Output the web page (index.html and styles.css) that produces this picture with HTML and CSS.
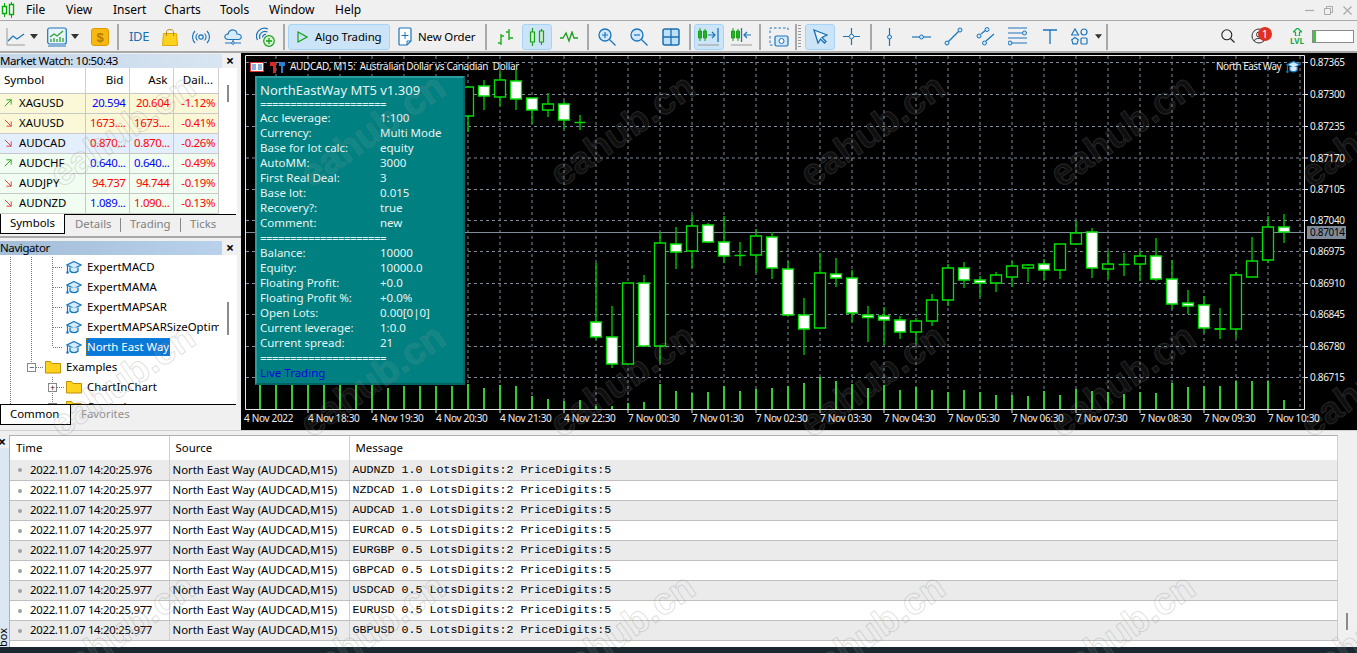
FILE: index.html
```html
<!DOCTYPE html>
<html lang="en">
<head>
<meta charset="utf-8">
<title>MetaTrader 5</title>
<link rel="stylesheet" href="styles.css">
</head>
<body>
<svg class="defs" width="0" height="0">
  <symbol id="cap" viewBox="0 0 16 15"><path d="M8 1.5 15 5 8 8.5 1 5Z" fill="#d5eafa" stroke="#1878be" stroke-width="1.3"/><path d="M4 7.5V11c2 2.2 6 2.2 8 0V7.5" fill="#d5eafa" stroke="#1878be" stroke-width="1.3"/><path d="M1.5 5.5V12" stroke="#1878be" stroke-width="1.2"/><circle cx="1.5" cy="12.5" r="1.3" fill="#1878be"/></symbol>
  <symbol id="up" viewBox="0 0 10 10"><path d="M1 9 9 1M3 1h6v6" fill="none" stroke="#12a012" stroke-width="1.1"/></symbol>
  <symbol id="down" viewBox="0 0 10 10"><path d="M1 1 9 9M9 3v6H3" fill="none" stroke="#d83030" stroke-width="1.1"/></symbol>
  <symbol id="folder" viewBox="0 0 16 14"><path d="M.5 13V1.5h5l1.5 2h8.500V13Z" fill="#ffd21e" stroke="#c49000"/></symbol>
  <symbol id="drop" viewBox="0 0 8 5"><path d="M0 0h8L4 5Z" fill="#333"/></symbol>
</svg>

<header class="menubar">
  <svg class="logo" width="14" height="16" viewBox="0 0 14 16"><path d="M3.500 1v14M10.500 0v16" stroke="#0a0" stroke-width="1"/><path d="M1.500 4.500h4v7h-4zM8.500 2.500h4v10h-4z" fill="#fff" stroke="#0a0" stroke-width="1.400"/></svg>
  <nav class="menu">
    <span class="mi m-file">File</span><span class="mi m-view">View</span><span class="mi m-insert">Insert</span><span class="mi m-charts">Charts</span><span class="mi m-tools">Tools</span><span class="mi m-window">Window</span><span class="mi m-help">Help</span>
  </nav>
  <div class="winctl">
    <svg width="9" height="9" viewBox="0 0 9 9"><path d="M0 4.500h9" stroke="#a8a8a8" stroke-width="1.200"/></svg>
    <svg width="9" height="9" viewBox="0 0 9 9"><path d="M.5 2.500h6v6h-6zM2.500 2.500v-2h6v6h-2" fill="none" stroke="#a8a8a8"/></svg>
    <svg width="9" height="9" viewBox="0 0 9 9"><path d="m.5.500 8 8m0-8-8 8" stroke="#a8a8a8" stroke-width="1.200"/></svg>
  </div>
</header>

<div class="toolbar">
  <svg class="ic ml6" width="20" height="20" viewBox="0 0 20 20"><path d="M1 1v17h18" fill="none" stroke="#999"/><path d="M2 14l5-5 4 3 7-5" fill="none" stroke="#1a75bb" stroke-width="1.200"/></svg>
  <svg class="ic ml4" width="8" height="5"><use href="#drop"/></svg>
  <svg class="ic ml9" width="20" height="20" viewBox="0 0 20 20"><rect x=".7" y="1" width="18.600" height="16" rx="2" fill="#e8f3fc" stroke="#1a75bb" stroke-width="1.200"/><path d="M3 10l4-3 3 2 6-5" fill="none" stroke="#2aa02a" stroke-width="1.200"/><path d="M4 15v-3M7 15v-4M10 15v-3M13 15v-5M16 15v-4" stroke="#2aa02a" stroke-width="1.300"/><path d="M1 19h18" stroke="#1a75bb"/></svg>
  <svg class="ic ml4" width="8" height="5"><use href="#drop"/></svg>
  <svg class="ic ml12" width="18" height="18" viewBox="0 0 18 18"><rect x=".5" y=".5" width="17" height="17" rx="2.500" fill="#f7b90f" stroke="#dd9a00"/><text class="dollar" x="9" y="14">$</text></svg>
  <i class="sep ml8"></i>
  <span class="ide ml10">IDE</span>
  <svg class="ic ml15" width="16" height="18" viewBox="0 0 16 18"><path d="M1.500 5.500h13l1 12H.5Z" fill="#ffd21e" stroke="#e0a800"/><path d="M4.500 8V3.500C4.500 1 11.500 1 11.500 3.500V8" fill="none" stroke="#b48a10"/></svg>
  <svg class="ic ml14" width="18" height="14" viewBox="0 0 18 14"><circle cx="9" cy="7" r="2.200" fill="none" stroke="#1a75bb" stroke-width="1.200"/><path d="M5.500 3.500c-1.800 2-1.800 5 0 7M12.500 3.500c1.800 2 1.800 5 0 7M3 1c-3.300 3.500-3.300 8.500 0 12M15 1c3.300 3.500 3.300 8.500 0 12" fill="none" stroke="#1a75bb" stroke-width="1.100"/></svg>
  <svg class="ic ml14" width="18" height="18" viewBox="0 0 18 18"><path d="M4.500 11.500C1.500 11.500.5 9.500 1 8c.5-1.500 2-2.200 3-1.800C4.500 3 7 1.500 9.500 2c2.300.5 3.500 2.500 3.500 4 2.500-.2 4.500 1.500 4.300 3.200-.2 1.600-1.500 2.300-3 2.300Z" fill="#d8ecfb" stroke="#1a75bb" stroke-width="1.100"/><path d="M9 11.500v3M1 15h16" stroke="#1a75bb" stroke-width="1.100"/><circle cx="9" cy="15" r="1.300" fill="#fff" stroke="#1a75bb"/></svg>
  <svg class="ic ml14" width="19" height="20" viewBox="0 0 19 20"><path d="M1.500 13A8 8 0 0 1 12 2M4 12a5.500 5.500 0 0 1 7.500-7M6.500 10.500a3 3 0 0 1 3.500-3" fill="none" stroke="#1a75bb" stroke-width="1.200"/><circle cx="13" cy="14" r="5.300" fill="#d8f4d8" stroke="#1aa01a" stroke-width="1.200"/><path d="M13 11v6M10 14h6" stroke="#1aa01a" stroke-width="1.300"/></svg>
  <i class="sep ml8"></i>
  <div class="btn on algo ml3">
    <svg width="11" height="12" viewBox="0 0 11 12"><path d="M1 1l9 5-9 5Z" fill="none" stroke="#18a018" stroke-width="1.200"/></svg>
    <span>Algo Trading</span>
  </div>
  <div class="btn order">
    <svg width="14" height="19" viewBox="0 0 14 19"><path d="M2 1h10a1 1 0 0 1 1 1v12l-4 4H2a1 1 0 0 1-1-1V2a1 1 0 0 1 1-1Z" fill="#fff" stroke="#1a75bb" stroke-width="1.200"/><path d="M7 5v7M3.500 8.500h7M13 14H9v4" fill="none" stroke="#1a75bb"/></svg>
    <span>New Order</span>
  </div>
  <i class="sep ml4"></i>
  <svg class="ic ml9" width="18" height="18" viewBox="0 0 18 18"><path d="M5 6v11M2 15h3M5 8h3M13 1v11M10 4h3M13 10h4" fill="none" stroke="#18b018" stroke-width="1.400"/></svg>
  <div class="btn on sq ml8"><svg width="16" height="18" viewBox="0 0 16 18"><path d="M3.500 0v18M12.500 1v16" stroke="#18a018" stroke-width="1.200"/><path d="M1.500 4h4v10h-4zM10.500 3h4v11h-4z" fill="#cfeecf" stroke="#18a018" stroke-width="1.200"/></svg></div>
  <svg class="ic ml8" width="18" height="12" viewBox="0 0 18 12"><path d="M0 7h3l3-5 3 8 3-9 2 6h4" fill="none" stroke="#18a018" stroke-width="1.300"/></svg>
  <i class="sep ml9"></i>
  <svg class="ic ml9" width="18" height="18" viewBox="0 0 18 18"><circle cx="7" cy="7" r="6" fill="#d3e9fb" stroke="#1a75bb" stroke-width="1.300"/><path d="M7 4v6M4 7h6" stroke="#1a75bb" stroke-width="1.200"/><path d="m11.500 11.500 6 6" stroke="#1a75bb" stroke-width="1.300"/></svg>
  <svg class="ic ml14" width="18" height="18" viewBox="0 0 18 18"><circle cx="7" cy="7" r="6" fill="#d3e9fb" stroke="#1a75bb" stroke-width="1.300"/><path d="M4 7h6" stroke="#1a75bb" stroke-width="1.200"/><path d="m11.500 11.500 6 6" stroke="#1a75bb" stroke-width="1.300"/></svg>
  <svg class="ic ml14" width="18" height="18" viewBox="0 0 18 18"><rect x="1" y="1" width="16" height="16" rx="2" fill="#bfe0fa" stroke="#1a6fb0" stroke-width="1.500"/><path d="M9 1v16M1 9h16" stroke="#1a6fb0" stroke-width="1.300"/></svg>
  <i class="sep ml9"></i>
  <div class="btn on sq ml3"><svg width="22" height="20" viewBox="0 0 22 20"><path d="M2 1v13M7 2v12" stroke="#18a018"/><path d="M.5 4h3v7h-3zM5.500 4h3v7h-3z" fill="#28b028" stroke="#18a018"/><path d="M10 8h6M14 5l3 3-3 3" fill="none" stroke="#1a75bb" stroke-width="1.200"/><path d="M20 1v14" stroke="#1a75bb" stroke-width="1.300"/><path d="M0 18h21" stroke="#999"/></svg></div>
  <svg class="ic ml7" width="21" height="20" viewBox="0 0 21 20"><path d="M2 1v13M7 2v12" stroke="#18a018"/><path d="M.5 4h3v7h-3zM5.500 4h3v7h-3z" fill="#28b028" stroke="#18a018"/><path d="M10.500 1v14" stroke="#1a75bb" stroke-width="1.300"/><path d="M20 8h-6M16 5l-3 3 3 3" fill="none" stroke="#1a75bb" stroke-width="1.200"/><path d="M0 18h21" stroke="#999"/></svg>
  <i class="sep ml7"></i>
  <svg class="ic ml8" width="20" height="20" viewBox="0 0 20 20"><path d="M1 6V1h18v4M1 9v9h3" fill="none" stroke="#1a75bb" stroke-dasharray="2.500 2"/><rect x="6" y="9" width="13" height="10" rx="1.500" fill="#d3e9fb" stroke="#1a75bb" stroke-width="1.200"/><circle cx="12.500" cy="14" r="2.500" fill="#fff" stroke="#1a75bb"/></svg>
  <i class="sep ml6"></i>
  <i class="grip ml1"></i>
  <div class="btn on sq ml4"><svg width="15" height="15" viewBox="0 0 15 15"><path d="M1 1l13 5-5 2.500 4 4-1.500 1.500-4-4L5 14Z" fill="#e8f4fd" stroke="#1a6fb0" stroke-width="1.300"/></svg></div>
  <svg class="ic ml8" width="17" height="17" viewBox="0 0 17 17"><path d="M8.500 0v6M8.500 11v6M0 8.500h6M11 8.500h6" stroke="#1a75bb" stroke-width="1.200"/><circle cx="8.500" cy="8.500" r="2.200" fill="none" stroke="#1a75bb"/></svg>
  <i class="sep ml10"></i>
  <svg class="ic ml15" width="5" height="18" viewBox="0 0 5 18"><path d="M2.500 0v18" stroke="#1a75bb" stroke-width="1.200"/><circle cx="2.500" cy="9" r="2" fill="#d3e9fb" stroke="#1a75bb"/></svg>
  <svg class="ic ml20" width="19" height="6" viewBox="0 0 19 6"><path d="M0 3h19" stroke="#1a75bb" stroke-width="1.200"/><circle cx="9.500" cy="3" r="2" fill="#d3e9fb" stroke="#1a75bb"/></svg>
  <svg class="ic ml13" width="19" height="19" viewBox="0 0 19 19"><path d="M4 15 15 4" stroke="#1a75bb" stroke-width="1.200"/><circle cx="3" cy="16" r="2" fill="#d3e9fb" stroke="#1a75bb"/><circle cx="16" cy="3" r="2" fill="#d3e9fb" stroke="#1a75bb"/></svg>
  <svg class="ic ml13" width="19" height="19" viewBox="0 0 19 19"><path d="M5 7 10 3M10 14 18 7" stroke="#1a75bb" stroke-width="1.200"/><circle cx="3" cy="9" r="2" fill="#d3e9fb" stroke="#1a75bb"/><circle cx="11" cy="2.500" r="2" fill="#d3e9fb" stroke="#1a75bb"/><circle cx="8.500" cy="16" r="2" fill="#d3e9fb" stroke="#1a75bb"/></svg>
  <svg class="ic ml13" width="19" height="19" viewBox="0 0 19 19"><path d="M0 1h19M0 6h14M0 11h19M3 16h16" stroke="#1a75bb" stroke-width="1.200"/><circle cx="16.500" cy="6" r="2" fill="#d3e9fb" stroke="#1a75bb"/><circle cx="2" cy="16" r="2" fill="#d3e9fb" stroke="#1a75bb"/></svg>
  <svg class="ic ml16" width="14" height="15" viewBox="0 0 14 15"><path d="M0 1h14M7 1v14" stroke="#1a75bb" stroke-width="1.300"/></svg>
  <svg class="ic ml14" width="17" height="17" viewBox="0 0 17 17"><path d="M4 1l3.500 6H.5Z" fill="none" stroke="#1a75bb" stroke-width="1.200"/><circle cx="13" cy="4" r="3" fill="none" stroke="#1a75bb" stroke-width="1.200"/><path d="M4 9.500l3.200 2.300-1.200 4H2l-1.200-4Z" fill="none" stroke="#1a75bb" stroke-width="1.200"/><rect x="10" y="10" width="6" height="6" rx="1" fill="none" stroke="#1a75bb" stroke-width="1.200"/></svg>
  <svg class="ic ml7" width="7" height="5"><use href="#drop"/></svg>
  <i class="sep ml4"></i>
  <div class="tb-right">
    <svg width="14" height="14" viewBox="0 0 14 14"><circle cx="5.800" cy="5.800" r="5" fill="none" stroke="#222" stroke-width="1.100"/><path d="m9.500 9.500 4 4" stroke="#222" stroke-width="1.100"/></svg>
    <div class="user">
      <svg width="16" height="16" viewBox="0 0 16 16"><circle cx="8" cy="8" r="7" fill="none" stroke="#333"/><circle cx="8" cy="6.500" r="2.500" fill="none" stroke="#333"/><path d="M3 13c1-3.500 9-3.500 10 0" fill="none" stroke="#333"/></svg>
      <b class="badge">1</b>
    </div>
    <div class="lvl">
      <svg width="9" height="8" viewBox="0 0 9 8"><path d="M4.500 0 9 4H6.500v4h-4V4H0Z" fill="none" stroke="#10b040" stroke-width="1.200"/></svg>
      <span>LVL</span>
    </div>
    <div class="meter"><i class="meter-fill"></i></div>
  </div>
</div>

<main class="main">
  <aside class="side">
    <section class="mw">
      <div class="phead mw-head"><span>Market Watch: 10:50:43</span><b class="close">×</b></div>
      <div class="mw-body">
        <table class="quotes">
          <thead><tr><th class="sym">Symbol</th><th>Bid</th><th>Ask</th><th>Dail...</th></tr></thead>
          <tbody>
            <tr class="yel"><td class="sym"><svg width="8" height="8"><use href="#up"/></svg>XAGUSD</td><td class="blu">20.594</td><td class="red">20.604</td><td class="red">-1.12%</td></tr>
            <tr class="yel"><td class="sym"><svg width="8" height="8"><use href="#down"/></svg>XAUUSD</td><td class="red">1673....</td><td class="red">1673....</td><td class="red">-0.41%</td></tr>
            <tr class="sky"><td class="sym"><svg width="8" height="8"><use href="#down"/></svg>AUDCAD</td><td class="red">0.870...</td><td class="red">0.870...</td><td class="red">-0.26%</td></tr>
            <tr class="grn"><td class="sym"><svg width="8" height="8"><use href="#up"/></svg>AUDCHF</td><td class="blu">0.640...</td><td class="blu">0.640...</td><td class="red">-0.49%</td></tr>
            <tr class="grn"><td class="sym"><svg width="8" height="8"><use href="#down"/></svg>AUDJPY</td><td class="red">94.737</td><td class="red">94.744</td><td class="red">-0.19%</td></tr>
            <tr class="grn"><td class="sym"><svg width="8" height="8"><use href="#down"/></svg>AUDNZD</td><td class="blu">1.089...</td><td class="red">1.090...</td><td class="red">-0.13%</td></tr>
          </tbody>
        </table>
        <div class="vscroll mw-scroll"><i></i></div>
      </div>
      <div class="tabs">
        <span class="tab active sym-tab">Symbols</span><span class="tab t1">Details</span><i class="tsep"></i><span class="tab t2">Trading</span><i class="tsep"></i><span class="tab t2">Ticks</span>
      </div>
    </section>
    <section class="nav">
      <div class="phead nav-head"><span>Navigator</span><b class="close">×</b></div>
      <div class="nav-body">
        <ul class="tree">
          <li class="row l3"><svg width="16" height="15"><use href="#cap"/></svg><span>ExpertMACD</span></li>
          <li class="row l3"><svg width="16" height="15"><use href="#cap"/></svg><span>ExpertMAMA</span></li>
          <li class="row l3"><svg width="16" height="15"><use href="#cap"/></svg><span>ExpertMAPSAR</span></li>
          <li class="row l3"><svg width="16" height="15"><use href="#cap"/></svg><span>ExpertMAPSARSizeOptim</span></li>
          <li class="row l3 last"><svg width="16" height="15"><use href="#cap"/></svg><span class="sel">North East Way</span></li>
          <li class="row l2"><i class="tog">−</i><svg width="16" height="14"><use href="#folder"/></svg><span>Examples</span></li>
          <li class="row l3b"><i class="tog">+</i><svg width="16" height="14"><use href="#folder"/></svg><span>ChartInChart</span></li>
          <li class="row l3b"><i class="tog">+</i><svg width="16" height="14"><use href="#folder"/></svg><span>Controls</span></li>
        </ul>
        <div class="vscroll nav-scroll"><i></i></div>
      </div>
      <div class="tabs tabs-nav">
        <span class="tab active com-tab">Common</span><span class="tab t3">Favorites</span>
      </div>
    </section>
  </aside>

  <div class="chart">
    <svg class="chart-svg" width="1116" height="377" viewBox="241 53 1116 377">
      <rect x="241" y="53" width="1116" height="377" fill="#000"/>
      <path class="grid" d="M276 56V409M308 56V409M340 56V409M372 56V409M404 56V409M436 56V409M468 56V409M500 56V409M532 56V409M564 56V409M596 56V409M628 56V409M660 56V409M692 56V409M724 56V409M756 56V409M788 56V409M820 56V409M852 56V409M884 56V409M916 56V409M948 56V409M980 56V409M1012 56V409M1044 56V409M1076 56V409M1108 56V409M1140 56V409M1172 56V409M1204 56V409M1236 56V409M1268 56V409M1300 56V409M246 62.500H1304M246 94.500H1304M246 126.500H1304M246 158H1304M246 189.500H1304M246 220.500H1304M246 251.500H1304M246 283.500H1304M246 314.500H1304M246 346.500H1304M246 377.500H1304"/>
      <path class="priceline" d="M246 232.500H1304"/>
      <path class="vol" d="M260 385V409M276 385V409M292 385V409M308 385V409M324 385V409M340 385V409M356 385V409M372 385V409M388 388V409M404 386V409M420 386V409M436 386V409M452 386V409M468 384V409M484 388V409M500 385V409M516 386V409M532 396V409M548 399V409M564 401V409M580 400V409M596 406V409M612 406V409M628 403V409M644 402V409M660 384V409M676 391V409M692 393V409M708 392V409M724 386V409M740 391V409M756 389V409M772 388V409M788 386V409M804 383V409M820 377V409M836 381V409M852 384V409M868 388V409M884 385V409M900 390V409M916 387V409M932 390V409M948 392V409M964 390V409M980 392V409M996 395V409M1012 395V409M1028 396V409M1044 391V409M1060 395V409M1076 389V409M1092 391V409M1108 392V409M1124 394V409M1140 392V409M1156 393V409M1172 383V409M1188 387V409M1204 386V409M1220 386V409M1236 381V409M1252 381V409M1268 381V409M1284 400V409"/>
      <path class="wick" d="M468 87V132M484 80V110M500 71V106M516 70V110M532 98V124M548 93V117M564 101V129M580 115V130M596 263V340M612 306V368M644 275V346M660 232V363M676 227V269M692 215V268M708 223V243M724 216V263M740 242V266M756 229V273M772 232V279M788 261V316M804 298V355M820 253V328M836 258V287M852 270V322M868 306V342M884 307V345M900 316V339M916 318V344M932 294V326M948 264V306M964 262V288M980 276V297M996 272V292M1012 261V287M1028 264V282M1044 259V280M1060 244V279M1076 221V245M1092 228V278M1108 251V279M1124 253V276M1140 251V281M1156 238V281M1172 260V309M1188 290V314M1204 296V333M1220 308V339M1236 272V338M1252 237V277M1268 216V263M1284 214V243"/>
      <path class="bull" d="M462.500 87h11v29h-11zM494.500 80h11v17h-11zM542.500 104h11v6h-11zM622.500 283h11v81h-11zM654.500 243h11v103h-11zM686.500 226h11v25h-11zM750.500 236h11v19h-11zM814.500 273h11v55h-11zM910.500 321h11v11h-11zM926.500 300h11v21h-11zM942.500 268h11v32h-11zM990.500 275h11v8h-11zM1006.500 266h11v11h-11zM1022.500 265h11v3h-11zM1054.500 244h11v26h-11zM1070.500 233h11v11h-11zM1102.500 264h11v5h-11zM1134.500 256h11v8h-11zM1230.500 275h11v54h-11zM1246.500 261h11v16h-11zM1262.500 227h11v33h-11z"/>
      <path class="bear" d="M478.500 86h11v10h-11zM510.500 81h11v18h-11zM526.500 98h11v12h-11zM558.500 104h11v16h-11zM590.500 322h11v15h-11zM606.500 337h11v27h-11zM638.500 283h11v63h-11zM670.500 244h11v8h-11zM702.500 225h11v17h-11zM718.500 242h11v14h-11zM766.500 237h11v31h-11zM782.500 269h11v46h-11zM798.500 315h11v14h-11zM830.500 274h11v4h-11zM846.500 278h11v35h-11zM862.500 315h11v2.500h-11zM878.500 316h11v4h-11zM894.500 320h11v12h-11zM958.500 268h11v12h-11zM974.500 280h11v3h-11zM1038.500 264h11v6h-11zM1086.500 232h11v36h-11zM1150.500 256h11v23h-11zM1166.500 279h11v25h-11zM1182.500 303h11v3h-11zM1198.500 305h11v23h-11zM1278.500 227h11v5h-11z"/>
      <path class="doji" d="M574.500 122.500h11M734.500 255.500h11M1118.500 264.500h11"/>
      <path class="doji thick" d="M1214.500 329h11"/>
      <path class="frame" d="M245.500 55.500H1304.500V409.500H245.500Z"/>
      <path class="ticks" d="M308 409v4M372 409v4M436 409v4M500 409v4M564 409v4M628 409v4M692 409v4M756 409v4M820 409v4M884 409v4M948 409v4M1012 409v4M1076 409v4M1140 409v4M1204 409v4M1268 409v4M1304 62.500h4M1304 94.500h4M1304 126.500h4M1304 158h4M1304 189.500h4M1304 220.500h4M1304 251.500h4M1304 283.500h4M1304 314.500h4M1304 346.500h4M1304 377.500h4"/>
      <rect class="pricebox" x="1307" y="226" width="39" height="13"/>
      <g class="axis">
        <text x="1310" y="66">0.87365</text><text x="1310" y="98">0.87300</text><text x="1310" y="130">0.87235</text><text x="1310" y="162">0.87170</text><text x="1310" y="193">0.87105</text><text x="1310" y="224">0.87040</text><text x="1310" y="255">0.86975</text><text x="1310" y="287">0.86910</text><text x="1310" y="318">0.86845</text><text x="1310" y="350">0.86780</text><text x="1310" y="381">0.86715</text>
        <text class="cur" x="1310" y="236">0.87014</text>
        <text x="244" y="422">4 Nov 2022</text><text x="308" y="422">4 Nov 18:30</text><text x="372" y="422">4 Nov 19:30</text><text x="436" y="422">4 Nov 20:30</text><text x="500" y="422">4 Nov 21:30</text><text x="564" y="422">4 Nov 22:30</text><text x="628" y="422">7 Nov 00:30</text><text x="692" y="422">7 Nov 01:30</text><text x="756" y="422">7 Nov 02:30</text><text x="820" y="422">7 Nov 03:30</text><text x="884" y="422">7 Nov 04:30</text><text x="948" y="422">7 Nov 05:30</text><text x="1012" y="422">7 Nov 06:30</text><text x="1076" y="422">7 Nov 07:30</text><text x="1140" y="422">7 Nov 08:30</text><text x="1204" y="422">7 Nov 09:30</text><text x="1268" y="422">7 Nov 10:30</text>
        <text x="290" y="70">AUDCAD, M15:  Australian Dollar vs Canadian  Dollar</text>
        <text class="ea-name" x="1216" y="70">North East Way</text>
      </g>
      <rect x="250.500" y="62.500" width="13" height="9" fill="#fff" stroke="#e03030"/>
      <path d="M252 65h4M252 67h4M252 69h4M258 65h4M258 67h4M258 69h4" stroke="#2060c0"/>
      <path d="M270 62h6v11h-3v-7h-3z" fill="#d82828"/>
      <path d="M279 62h6v4h-2v7h-2v-7h-2z" fill="#2a7fd0"/>
      <use href="#cap" x="1286" y="60" width="15" height="14"/>
    </svg>
    <div class="ea">
      <div class="ea-title">NorthEastWay MT5 v1.309</div>
      <div class="ea-rule first">=====================</div>
      <div class="ea-row"><span>Acc leverage:</span><span>1:100</span></div>
      <div class="ea-row"><span>Currency:</span><span>Multi Mode</span></div>
      <div class="ea-row"><span>Base for lot calc:</span><span>equity</span></div>
      <div class="ea-row"><span>AutoMM:</span><span>3000</span></div>
      <div class="ea-row"><span>First Real Deal:</span><span>3</span></div>
      <div class="ea-row"><span>Base lot:</span><span>0.015</span></div>
      <div class="ea-row"><span>Recovery?:</span><span>true</span></div>
      <div class="ea-row"><span>Comment:</span><span>new</span></div>
      <div class="ea-rule">=====================</div>
      <div class="ea-row"><span>Balance:</span><span>10000</span></div>
      <div class="ea-row"><span>Equity:</span><span>10000.0</span></div>
      <div class="ea-row"><span>Floating Profit:</span><span>+0.0</span></div>
      <div class="ea-row"><span>Floating Profit %:</span><span>+0.0%</span></div>
      <div class="ea-row"><span>Open Lots:</span><span>0.00[0|0]</span></div>
      <div class="ea-row"><span>Current leverage:</span><span>1:0.0</span></div>
      <div class="ea-row"><span>Current spread:</span><span>21</span></div>
      <div class="ea-rule">=====================</div>
      <div class="ea-live">Live Trading</div>
    </div>
  </div>
</main>

<section class="toolbox">
  <div class="tb-strip"><b class="close">×</b><span class="vert">box</span></div>
  <div class="tb-table">
    <table class="log">
      <thead><tr><th>Time</th><th>Source</th><th>Message</th></tr></thead>
      <tbody>
        <tr><td class="t"><i class="dot"></i>2022.11.07 14:20:25.976</td><td>North East Way (AUDCAD,M15)</td><td class="m">AUDNZD 1.0 LotsDigits:2 PriceDigits:5</td></tr>
        <tr><td class="t"><i class="dot"></i>2022.11.07 14:20:25.977</td><td>North East Way (AUDCAD,M15)</td><td class="m">NZDCAD 1.0 LotsDigits:2 PriceDigits:5</td></tr>
        <tr><td class="t"><i class="dot"></i>2022.11.07 14:20:25.977</td><td>North East Way (AUDCAD,M15)</td><td class="m">AUDCAD 1.0 LotsDigits:2 PriceDigits:5</td></tr>
        <tr><td class="t"><i class="dot"></i>2022.11.07 14:20:25.977</td><td>North East Way (AUDCAD,M15)</td><td class="m">EURCAD 0.5 LotsDigits:2 PriceDigits:5</td></tr>
        <tr><td class="t"><i class="dot"></i>2022.11.07 14:20:25.977</td><td>North East Way (AUDCAD,M15)</td><td class="m">EURGBP 0.5 LotsDigits:2 PriceDigits:5</td></tr>
        <tr><td class="t"><i class="dot"></i>2022.11.07 14:20:25.977</td><td>North East Way (AUDCAD,M15)</td><td class="m">GBPCAD 0.5 LotsDigits:2 PriceDigits:5</td></tr>
        <tr><td class="t"><i class="dot"></i>2022.11.07 14:20:25.977</td><td>North East Way (AUDCAD,M15)</td><td class="m">USDCAD 0.5 LotsDigits:2 PriceDigits:5</td></tr>
        <tr><td class="t"><i class="dot"></i>2022.11.07 14:20:25.977</td><td>North East Way (AUDCAD,M15)</td><td class="m">EURUSD 0.5 LotsDigits:2 PriceDigits:5</td></tr>
        <tr><td class="t"><i class="dot"></i>2022.11.07 14:20:25.977</td><td>North East Way (AUDCAD,M15)</td><td class="m">GBPUSD 0.5 LotsDigits:2 PriceDigits:5</td></tr>
      </tbody>
    </table>
  </div>
  <div class="vscroll log-scroll"><i></i></div>
</section>
<div class="statusbar"></div>

<div class="wm-clip" aria-hidden="true">
  <div class="watermarks">
    <span>eahub.cn</span><span>eahub.cn</span><span>eahub.cn</span><span>eahub.cn</span><span>eahub.cn</span><span>eahub.cn</span>
    <span>eahub.cn</span><span>eahub.cn</span><span>eahub.cn</span><span>eahub.cn</span><span>eahub.cn</span><span>eahub.cn</span>
    <span>eahub.cn</span><span>eahub.cn</span><span>eahub.cn</span><span>eahub.cn</span><span>eahub.cn</span><span>eahub.cn</span>
  </div>
</div>
</body>
</html>
```
FILE: styles.css
```css
* { box-sizing: border-box; }
html, body { margin: 0; padding: 0; }
body {
  width: 1357px; height: 653px; overflow: hidden; position: relative;
  background: #f0f0f0; color: #000;
  font: 12px/1 "Noto Sans", "Liberation Sans", sans-serif;
}
.defs { position: absolute; }
i, b { font-style: normal; }
svg { display: block; flex: none; }

.menubar { height: 20px; display: flex; align-items: center; padding-left: 1px; background: #f0f0f0; }
.menu { display: flex; margin-left: 11px; }
.mi { display: block; }
.m-file { width: 40px; } .m-view { width: 47px; } .m-insert { width: 51px; } .m-charts { width: 56px; }
.m-tools { width: 49px; } .m-window { width: 66px; } .m-help { width: 30px; }
.winctl { margin-left: auto; display: flex; gap: 10px; padding-right: 5px; }

.toolbar {
  height: 33px; display: flex; align-items: center; position: relative;
  border-top: 1px solid #a8a8a8; border-bottom: 2px solid #a8a8a8; padding-top: 1px;
  background: #f0f0f0;
}
.ml1 { margin-left: 1px; } .ml3 { margin-left: 3px; } .ml4 { margin-left: 4px; } .ml5 { margin-left: 5px; }
.ml6 { margin-left: 6px; } .ml7 { margin-left: 7px; } .ml8 { margin-left: 8px; } .ml9 { margin-left: 9px; }
.ml10 { margin-left: 10px; } .ml12 { margin-left: 12px; } .ml13 { margin-left: 13px; } .ml14 { margin-left: 14px; }
.ml15 { margin-left: 15px; } .ml16 { margin-left: 16px; } .ml20 { margin-left: 20px; }
.sep { width: 2px; height: 26px; background: #a8a8a8; flex: none; }
.grip { width: 3px; height: 24px; flex: none; background: repeating-linear-gradient(to bottom, #999 0 1px, transparent 1px 3px); }
.dollar { font: bold 13px "Liberation Sans", sans-serif; fill: #b87a00; text-anchor: middle; }
.ide { color: #1a6fb0; font-size: 13px; width: 18px; flex: none; letter-spacing: -.3px; }
.btn { display: flex; align-items: center; height: 26px; flex: none; border-radius: 3px; border: 1px solid transparent; }
.btn span { font-size: 11.400px; letter-spacing: -.1px; white-space: nowrap; }
.btn.on { background: #cce4f7; border-color: #a6d4f7; }
.sq { width: 30px; justify-content: center; }
.algo { width: 102px; padding-left: 8px; gap: 7px; }
.order { padding-left: 7px; gap: 6px; width: 91px; }
.tb-right { position: absolute; left: 1221px; top: 0; bottom: 0; display: flex; align-items: center; }
.user { position: relative; margin-left: 16px; }
.badge {
  position: absolute; left: 7px; top: -1px; width: 14px; height: 14px; border-radius: 50%;
  background: #e03020; color: #fff; font-size: 11px; font-weight: 400; line-height: 14px; text-align: center;
}
.lvl { margin-left: 23px; width: 14px; display: flex; flex-direction: column; align-items: center; color: #10a840; font-size: 8px; font-weight: 700; gap: 1px; }
.meter { margin-left: 8px; width: 42px; height: 13px; border: 1px solid #8a8a8a; background: #fff; }
.meter-fill { display: block; width: 3px; height: 100%; background: #30d030; }

.main { display: flex; height: 377px; }
.side { width: 241px; flex: none; background: #f0f0f0; }
.phead { height: 14px; display: flex; align-items: center; position: relative; width: 222px; white-space: nowrap; font-size: 11.500px; letter-spacing: -.4px; }
.mw { height: 185px; padding-top: 1px; border-bottom: 2px solid #a8a8a8; }
.mw-head { background: linear-gradient(90deg, #c4d6e8, #d8e5f2); }
.nav-head { background: linear-gradient(90deg, #a4bdd8, #b9d1ea); }
.close { position: absolute; left: 226px; top: 0; width: 9px; font-size: 14px; line-height: 14px; font-weight: 700; }
.mw-body { display: flex; width: 237px; background: #fff; }
.quotes { border-collapse: collapse; table-layout: fixed; width: 219px; flex: none; font-size: 11.400px; }
.quotes th { height: 25px; background: #fff; font-weight: 400; text-align: right; padding: 0 5px 0 0; font-size: 11.600px; border-right: 1px solid #d0d0d0; border-bottom: 1px solid #c8c8c8; }
.quotes th:first-child { width: 85px; text-align: left; padding-left: 4px; }
.quotes th:nth-child(2), .quotes th:nth-child(3) { width: 44px; }
.quotes td { height: 20px; padding: 0 3px 0 0; text-align: right; white-space: nowrap; overflow: hidden; letter-spacing: -.35px; border-right: 1px solid #c8c8c8; border-bottom: 1px solid #c8c8c8; }
.quotes td.sym { text-align: left; padding-left: 4px; letter-spacing: 0; }
.quotes td.sym svg { display: inline-block; margin-right: 7px; }
.yel td { background: #fbf8d8; } .sky td { background: #e3effc; } .grn td { background: #f0fdf0; }
.blu { color: #0000ff; } .red { color: #ff0000; }
.vscroll { flex: 1; position: relative; }
.vscroll i { position: absolute; width: 2px; background: #8a8a8a; }
.mw-scroll i { left: 8px; top: 17px; height: 17px; }
.nav-scroll i { left: 8px; top: 47px; height: 33px; }
.tabs { height: 21px; display: flex; align-items: center; border-top: 1px solid #000; width: 236px; color: #808080; font-size: 11.400px; }
.tab { display: flex; align-items: center; height: 100%; flex: none; padding-bottom: 2px; }
.tab.active { background: #fff; color: #000; border-right: 1px solid #000; border-bottom: 1px solid #000; border-left: 1px solid #000; }
.sym-tab { width: 65px; padding-left: 9px; margin-top: -1px; height: 20px; }
.com-tab { width: 71px; padding-left: 9px; height: 20px; margin-top: -1px; }
.t1 { margin-left: 10px; width: 45px; } .t2 { margin-left: 9px; width: 50px; } .t3 { margin-left: 10px; color: #909090; height: 20px; align-self: flex-start; }
.tsep { width: 1px; height: 14px; background: #888; flex: none; }
.nav { padding-top: 3px; }
.nav-body { display: flex; width: 237px; height: 149px; background: #fff; overflow: hidden; }
.tree { list-style: none; margin: 0; padding: 2px 0 0; width: 219px; height: 149px; flex: none; overflow: hidden; font-size: 11.400px; }
.row { height: 20px; display: flex; align-items: center; white-space: nowrap; position: relative; overflow: hidden; --d: repeating-linear-gradient(to bottom, #777 0 1px, transparent 1px 2px); --h: repeating-linear-gradient(to right, #777 0 1px, transparent 1px 2px); }
.row svg { margin-right: 5px; }
.row.l3 { padding-left: 66px; background: var(--d) 10px 0/1px 100% no-repeat, var(--d) 31px 0/1px 100% no-repeat, var(--d) 52px 0/1px 100% no-repeat, var(--h) 53px 50%/10px 1px no-repeat; }
.row.l3.last { background: var(--d) 10px 0/1px 100% no-repeat, var(--d) 31px 0/1px 100% no-repeat, var(--d) 52px 0/1px 50% no-repeat, var(--h) 53px 50%/10px 1px no-repeat; }
.row.l2 { padding-left: 27px; background: var(--d) 10px 0/1px 100% no-repeat, var(--d) 31px 0/1px 50% no-repeat, var(--h) 36px 50%/8px 1px no-repeat; }
.row.l3b { padding-left: 48px; background: var(--d) 10px 0/1px 100% no-repeat, var(--d) 52px 0/1px 100% no-repeat, var(--h) 57px 50%/8px 1px no-repeat; }
.tog { width: 9px; height: 9px; border: 1px solid #888; background: #fff; margin-right: 9px; font-size: 9px; line-height: 7px; text-align: center; color: #222; flex: none; }
.sel { background: #0a78d7; color: #fff; outline: 1px dotted #a06a10; outline-offset: -1px; padding: 3px 1px; margin-left: -1px; }
.tabs-nav { height: 25px; }
.tabs-nav .tab.active { height: 20px; align-self: flex-start; margin-top: 0; }

.chart { flex: 1; position: relative; background: #000; overflow: hidden; }
.chart-svg { display: block; }
.grid { fill: none; stroke: #7f8a9a; stroke-width: 1; stroke-dasharray: 3 3; }
.priceline { stroke: #7f8a9a; stroke-width: 1; }
.vol { stroke: #32cd32; stroke-width: 2; fill: none; }
.wick { stroke: #00c000; stroke-width: 1.400; fill: none; }
.bull { fill: #000; stroke: #00e000; stroke-width: 1.300; }
.bear { fill: #fff; stroke: #00e000; stroke-width: 1.300; }
.doji { stroke: #00d800; stroke-width: 1.300; fill: none; }
.thick { stroke-width: 2; }
.frame, .ticks { fill: none; stroke: #e8e8e8; stroke-width: 1; }
.pricebox { fill: #7f8a9a; }
.axis text { font: 10px "Noto Sans", "Liberation Sans", sans-serif; fill: #f0f0f0; white-space: pre; letter-spacing: -.32px; }
.axis text.cur { fill: #000; }
.axis text.ea-name { letter-spacing: -.5px; }
.ea {
  position: absolute; left: 14px; top: 23px; width: 210px; height: 309px; padding: 5px 0 0 3px;
  background: #008080; color: #e6f4f4; font-size: 11.500px;
  border: 2px solid; border-color: #2a9c9c #006464 #006464 #2a9c9c;
}
.ea > div { height: 15px; line-height: 15px; white-space: nowrap; }
.ea .ea-title { font-size: 13px; }
.ea .ea-rule { letter-spacing: -.58px; }
.ea .ea-rule.first { height: 12px; line-height: 12px; }
.ea-row { display: flex; }
.ea-row span:first-child { width: 120px; flex: none; }
.ea .ea-live { color: #0000e0; }

.toolbox { display: flex; height: 217px; padding-top: 4px; background: #f0f0f0; border-top: 1px solid #d0d0d0; }
.tb-strip { width: 9px; height: 212px; position: relative; flex: none; background: linear-gradient(180deg, #f0f0f0 0 13px, #dbe7f3 13px); overflow: hidden; }
.tb-strip .close { left: -2px; top: 0; }
.vert { position: absolute; left: -3px; bottom: 0; writing-mode: vertical-rl; transform: rotate(180deg); font-size: 11px; }
.tb-table { width: 1329px; height: 212px; flex: none; background: #fff; border-left: 1px solid #b0b0b0; border-top: 1px solid #b0b0b0; font-size: 11.400px; }
.log { border-collapse: collapse; table-layout: fixed; width: 100%; }
.log th { height: 24px; background: #fff; font-weight: 400; text-align: left; padding-left: 6px; border-right: 1px solid #d0d0d0; }
.log th:nth-child(1) { width: 159px; } .log th:nth-child(2) { width: 180px; }
.log td { height: 20px; padding: 0 0 0 3px; white-space: nowrap; overflow: hidden; border-right: 1px solid #d0d0d0; border-bottom: 1px solid #c0c0c0; }
.log tbody tr:nth-child(odd) td { background: #ebebeb; }
.log td.t { padding-left: 20px; position: relative; letter-spacing: -.3px; }
.dot { position: absolute; left: 8px; top: 8px; width: 4px; height: 4px; border-radius: 50%; background: #a0a0a0; }
.log td.m { font: 11.670px "Liberation Mono", monospace; }
.log-scroll i { left: 8px; top: 178px; height: 17px; }
.statusbar { height: 6px; background: #1a2730; }

.wm-clip { position: absolute; left: 0; top: 0; width: 1357px; height: 653px; overflow: hidden; pointer-events: none; }
.watermarks {
  position: absolute; left: -3px; top: 5px; width: 1500px; display: grid;
  grid-template-columns: repeat(6, 250px); grid-auto-rows: 250px; place-items: center;
}
.watermarks span {
  font: 700 38px "Liberation Sans", sans-serif; white-space: nowrap; transform: rotate(-35deg);
  color: rgba(255, 255, 255, .08); -webkit-text-stroke: 1px rgba(128, 128, 128, .26);
}
```
